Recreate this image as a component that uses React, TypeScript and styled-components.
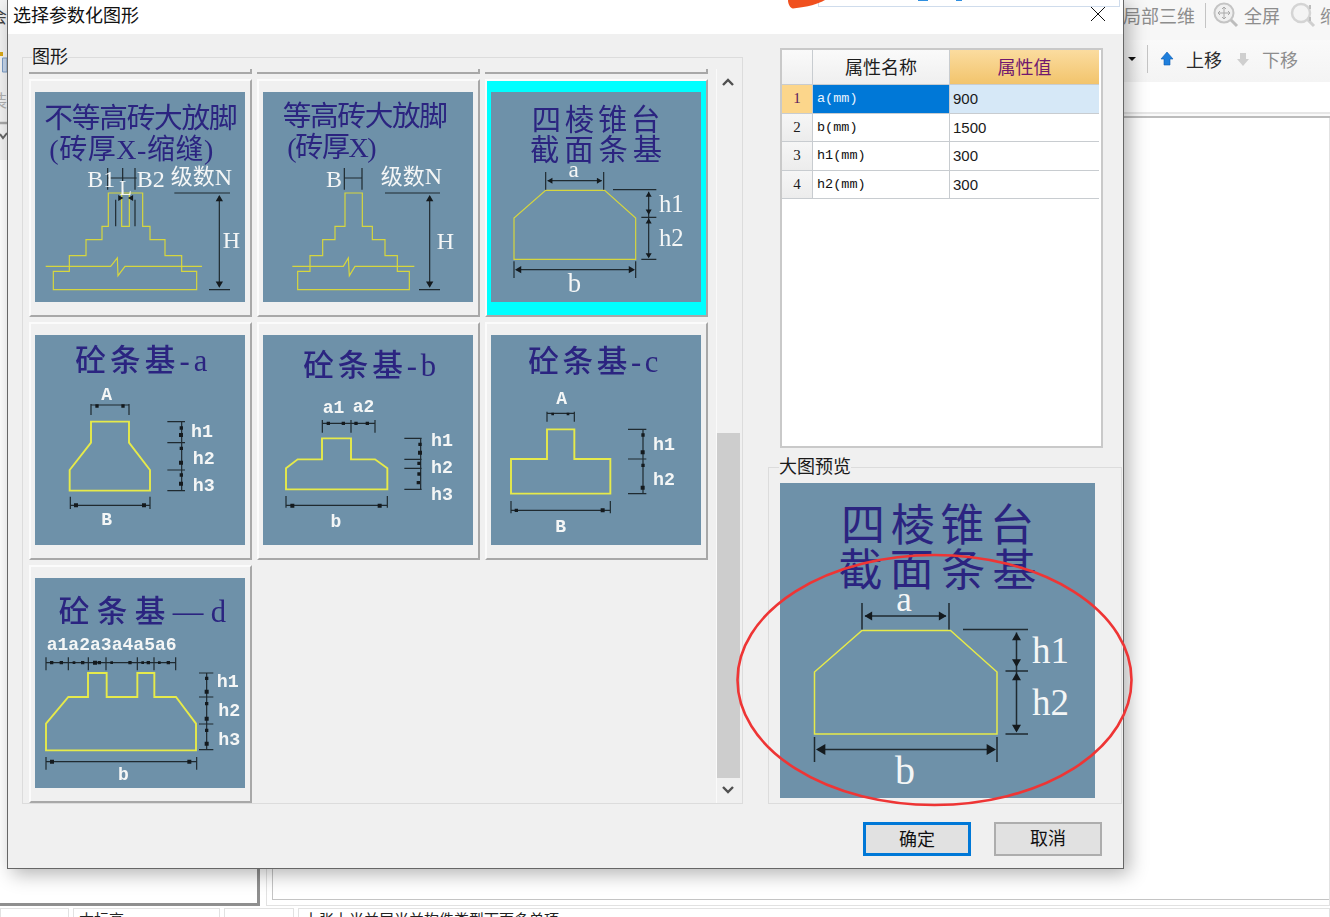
import React from "react";
import styled, { createGlobalStyle } from "styled-components";

const CJK = `"Noto Sans CJK SC", "Liberation Sans", sans-serif`;
const SERIF = `"Liberation Serif", "Noto Sans CJK SC", serif`;
const MONO = `"Liberation Mono", "Noto Sans CJK SC", monospace`;

const Global = createGlobalStyle`
  html, body { margin: 0; padding: 0; background: #fff; overflow: hidden; }
  body { font-family: ${CJK}; }
`;

const up = (x: number, y: number, s = 11) => `M${x} ${y}l${-s} ${s * 1.7}h${2 * s}z`;
const down = (x: number, y: number, s = 11) => `M${x} ${y}l${-s} ${-s * 1.7}h${2 * s}z`;
const left = (x: number, y: number, s = 11) => `M${x} ${y}l${s * 1.7} ${-s}v${2 * s}z`;
const right = (x: number, y: number, s = 11) => `M${x} ${y}l${-s * 1.7} ${-s}v${2 * s}z`;
const dot = (x: number, y: number, s = 4) => `M${x - s} ${y - s}h${2 * s}v${2 * s}h${-2 * s}z`;

type Txt = { x: number; y: number; s: number; t: string; w?: number; mid?: boolean };
type Spec = {
  box: string;
  titles: Txt[];
  labels: Txt[];
  bold?: boolean;
  outline: string;
  dims: string;
  heads: string;
};

const frustum: Spec = {
  box: "34 277 630 630",
  titles: [
    { x: 156, y: 392, s: 88, t: "四棱锥台", w: 386 },
    { x: 151, y: 482, s: 88, t: "截面条基", w: 396 },
  ],
  labels: [
    { x: 282, y: 533, s: 70, t: "a", mid: true },
    { x: 538, y: 637, s: 74, t: "h1" },
    { x: 538, y: 740, s: 74, t: "h2" },
    { x: 284, y: 878, s: 80, t: "b", mid: true },
  ],
  outline: "M198 572H375L468 655V779H103V655Z",
  dims: "M198 517V570M372 517V570M204 543H366M400 570H530M485 653H530M485 779H530M507 576V772M103 785V835M468 785V835M110 810H462",
  heads:
    left(203, 543, 9) + right(367, 543, 9) + up(507, 576, 9) + down(507, 645, 9) + up(507, 656, 9) + down(507, 776, 9) + left(106, 810) + right(466, 810),
};

const spec: Spec[] = [
  {
    box: "105 277 630 630",
    titles: [
      { x: 133, y: 385, s: 86, t: "不等高砖大放脚", w: 580 },
      { x: 148, y: 478, s: 84, t: "(砖厚X-缩缝)", w: 492 },
    ],
    labels: [
      { x: 262, y: 562, s: 72, t: "B1" },
      { x: 410, y: 562, s: 72, t: "B2" },
      { x: 358, y: 585, s: 62, t: "L" },
      { x: 512, y: 554, s: 66, t: "级数" },
      { x: 644, y: 556, s: 72, t: "N" },
      { x: 668, y: 745, s: 72, t: "H" },
    ],
    outline:
      "M160 815H208V768H258V720H306V680H325V580H428V680H450V720H495V768H545V815H590V870H160ZM365 580V680H388V580M137 800H332L352 775 354 828 375 800H606",
    dims: "M523 580H690M658 590V860M627 870H690M323 505V570M368 505V570M405 505V570M323 535H410M347 600V680M405 600V680",
    heads: up(658, 586) + down(658, 864) + right(370, 595, 9) + left(384, 595, 9),
  },
  {
    box: "789 277 630 630",
    titles: [
      { x: 848, y: 378, s: 86, t: "等高砖大放脚", w: 496 },
      { x: 862, y: 471, s: 84, t: "(砖厚X)", w: 268 },
    ],
    labels: [
      { x: 978, y: 562, s: 72, t: "B" },
      { x: 1142, y: 552, s: 66, t: "级数" },
      { x: 1274, y: 554, s: 72, t: "N" },
      { x: 1310, y: 748, s: 72, t: "H" },
    ],
    outline:
      "M893 815H930V768H968V720H1005V680H1035V580H1087V680H1117V720H1155V768H1192V815H1228V870H893ZM877 800H1030L1045 775 1048 828 1065 800H1243",
    dims: "M1033 505V570M1086 505V570M1033 535H1086M1155 580H1320M1289 590V860M1257 870H1320",
    heads: up(1289, 586) + down(1289, 864),
  },
  frustum,
  {
    box: "105 45 630 630",
    bold: true,
    titles: [{ x: 226, y: 152, s: 92, t: "砼条基-a", w: 396 }],
    labels: [
      { x: 320, y: 240, s: 54, t: "A", mid: true },
      { x: 573, y: 352, s: 55, t: "h1" },
      { x: 578, y: 432, s: 55, t: "h2" },
      { x: 578, y: 512, s: 55, t: "h3" },
      { x: 320, y: 615, s: 54, t: "B", mid: true },
    ],
    outline: "M273 305H387V368L450 450V512H209V450L273 368Z",
    dims: "M273 252V285M387 252V285M273 255H387M545 305V512M502 305H555M502 368H555M502 450H555M502 512H555M211 530V567M450 530V567M211 556H450",
    heads:
      dot(291, 258, 5) + dot(369, 258, 5) + dot(544, 324, 5) + dot(543, 345, 6) + dot(544, 385, 5) + dot(543, 428, 6) + dot(544, 465, 5) + dot(543, 491, 6) + dot(228, 556, 6) + dot(432, 556, 6),
  },
  {
    box: "789 45 630 630",
    bold: true,
    titles: [{ x: 910, y: 167, s: 92, t: "砼条基-b", w: 398 }],
    labels: [
      { x: 968, y: 280, s: 54, t: "a1" },
      { x: 1058, y: 275, s: 54, t: "a2" },
      { x: 1293, y: 378, s: 55, t: "h1" },
      { x: 1293, y: 458, s: 55, t: "h2" },
      { x: 1293, y: 540, s: 55, t: "h3" },
      { x: 1008, y: 620, s: 54, t: "b", mid: true },
    ],
    outline: "M966 355H1053V418H1125L1162 445V508H858V445L893 418H966Z",
    dims: "M967 300V338M1053 300V338M1125 300V338M967 310H1125M1262 355V508M1213 355H1265M1213 418H1265M1213 445H1265M1213 508H1265M858 528V563M1162 528V563M858 556H1162",
    heads:
      dot(985, 310, 5) + dot(1030, 310, 5) + dot(1068, 310, 5) + dot(1102, 310, 5) + dot(1260, 373, 5) + dot(1260, 398, 6) + dot(1257, 430, 5) + dot(1257, 462, 5) + dot(1255, 488, 5) + dot(877, 557, 6) + dot(1139, 557, 6),
  },
  {
    box: "34 45 630 630",
    bold: true,
    titles: [{ x: 146, y: 155, s: 92, t: "砼条基-c", w: 390 }],
    labels: [
      { x: 246, y: 252, s: 54, t: "A", mid: true },
      { x: 520, y: 390, s: 55, t: "h1" },
      { x: 520, y: 495, s: 55, t: "h2" },
      { x: 243, y: 635, s: 54, t: "B", mid: true },
    ],
    outline: "M202 328H284V417H392V521H94V417H202Z",
    dims: "M202 275V305M284 275V305M202 280H284M490 328V521M445 328H500M445 417H500M445 521H500M94 543V580M392 543V580M94 571H392",
    heads:
      dot(219, 282, 4) + dot(265, 282, 4) + dot(490, 345, 5) + dot(489, 397, 6) + dot(490, 436, 5) + dot(489, 503, 6) + dot(110, 571, 5) + dot(369, 571, 6),
  },
  {
    box: "105 55 630 630",
    bold: true,
    titles: [{ x: 176, y: 187, s: 92, t: "砼条基—d", w: 502 }],
    labels: [
      { x: 140, y: 270, s: 54, t: "a1a2a3a4a5a6", w: 390 },
      { x: 650, y: 383, s: 55, t: "h1" },
      { x: 655, y: 468, s: 55, t: "h2" },
      { x: 655, y: 556, s: 55, t: "h3" },
      { x: 370, y: 660, s: 54, t: "b", mid: true },
    ],
    outline: "M264 340H320V412H412V340H463V412H528L588 492V572H138V492L205 412H264Z",
    dims: "M138 293V332M205 293V332M265 293V332M318 293V332M412 293V332M462 293V332M527 293V332M138 309H527M620 340V570M597 340H640M597 412H640M597 493H640M597 570H640M138 592V630M590 592V630M138 606H590",
    heads:
      dot(155, 309, 5) + dot(184, 309, 5) + dot(222, 309, 4) + dot(248, 309, 5) + dot(285, 309, 6) + dot(298, 309, 5) + dot(335, 309, 4) + dot(390, 309, 5) + dot(428, 309, 4) + dot(445, 309, 5) + dot(478, 309, 4) + dot(505, 309, 5) + dot(620, 356, 5) + dot(620, 396, 6) + dot(620, 432, 5) + dot(620, 477, 6) + dot(620, 512, 5) + dot(620, 552, 6) + dot(156, 606, 6) + dot(568, 606, 6),
  },
];

const Desktop = styled.div`
  position: relative;
  width: 1330px;
  height: 917px;
  overflow: hidden;
  display: flex;
  flex-direction: column;
  background: #fff;
`;

const TopBar = styled.div`
  height: 40px;
  display: flex;
  align-items: center;
  padding-left: 1123px;
  background: #f7f7f7;
  box-sizing: border-box;
  padding-bottom: 10px;
`;
const ToolSep = styled.i<{ $h?: number; $gap?: number }>`
  display: block;
  width: 1px;
  height: ${(p) => p.$h ?? 25}px;
  margin-left: ${(p) => p.$gap ?? 0}px;
  background: #c4c4c4;
  flex: none;
`;
const ToolText = styled.span<{ $on?: boolean; $gap?: number }>`
  margin-left: ${(p) => p.$gap ?? 0}px;
  font-size: 18px;
  line-height: 24px;
  color: ${(p) => (p.$on ? "#2a2a2a" : "#8d8d8d")};
  white-space: nowrap;
  flex: none;
`;
const ToolIcon = styled.svg<{ $gap?: number }>`
  display: block;
  flex: none;
  margin-left: ${(p) => p.$gap ?? 0}px;
`;
const SubBar = styled.div`
  height: 42px;
  display: flex;
  align-items: center;
  padding-left: 1128px;
  background: linear-gradient(#fafafa, #f4f4f4);
  box-sizing: border-box;
  padding-bottom: 4px;
`;
const Caret = styled.i`
  width: 0;
  height: 0;
  border-left: 4px solid transparent;
  border-right: 4px solid transparent;
  border-top: 4px solid #111;
  flex: none;
  margin-right: 11px;
`;
const Blank = styled.div`
  height: 30px;
  background: #fff;
`;
const Rule = styled.div`
  height: 6px;
  box-sizing: border-box;
  border-top: 2px solid #e6e6e6;
  border-bottom: 2px solid #bcbcbc;
  background: #fafafa;
`;
const Workspace = styled.div`
  height: 788px;
  display: flex;
  gap: 6px;
`;
const LeftPanel = styled.div`
  width: 260px;
  box-sizing: border-box;
  border-right: 3px solid #8f8f8f;
  border-bottom: 3px solid #8f8f8f;
  background: #fff;
`;
const RightPanel = styled.div`
  flex: 1;
  box-sizing: border-box;
  border: 1px solid #e2e2e2;
  border-top: none;
  padding: 0 0 5px 5px;
`;
const RightInner = styled.div`
  height: 100%;
  box-sizing: border-box;
  border-left: 1px solid #c4c4c4;
  border-bottom: 1px solid #c4c4c4;
`;
const Status = styled.div`
  flex: 1;
  display: flex;
  gap: 4px;
  padding-top: 2px;
  overflow: hidden;
`;
const StatusCell = styled.div<{ $w?: number }>`
  width: ${(p) => (p.$w ? `${p.$w}px` : "auto")};
  flex: ${(p) => (p.$w ? "none" : "1")};
  box-sizing: border-box;
  border: 1px solid #e2e2e2;
  border-bottom: none;
  height: 30px;
  padding: 2px 0 0 5px;
  font-size: 15px;
  line-height: 16px;
  color: #222;
  white-space: nowrap;
`;

/* The slice of the window behind the dialog that stays visible along its left edge. */
const Rail = styled.div`
  position: absolute;
  left: 0;
  top: 0;
  width: 7px;
  height: 160px;
  overflow: hidden;
  background: #f3f3f3;
  display: flex;
  flex-direction: column;
`;
const RailGlyph = styled.span<{ $top: number; $dim?: boolean }>`
  display: block;
  flex: none;
  margin: ${(p) => p.$top}px 0 0 -10px;
  font-size: 17px;
  line-height: 20px;
  color: ${(p) => (p.$dim ? "#b0b0b0" : "#444")};
`;
const RailIcon = styled.svg<{ $top: number }>`
  display: block;
  flex: none;
  margin-top: ${(p) => p.$top}px;
`;

const Dialog = styled.div`
  position: absolute;
  left: 7px;
  top: 0;
  width: 1117px;
  height: 869px;
  box-sizing: border-box;
  border: 1px solid #666;
  border-top: none;
  background: #f0f0f0;
  box-shadow: 5px 5px 18px rgba(0, 0, 0, 0.3);
  display: flex;
  flex-direction: column;
`;
const TitleBar = styled.div`
  height: 34px;
  flex: none;
  background: #fff;
  display: flex;
  align-items: center;
  justify-content: space-between;
  padding: 0 17px 7px 5px;
  box-sizing: border-box;
  font-size: 18px;
  color: #111;
`;
const Main = styled.div`
  display: flex;
  padding: 14px 0 0 14px;
  flex: none;
`;
const Group = styled.div`
  position: relative;
  flex: none;
  width: 721px;
  height: 747px;
  margin-top: 9px;
  box-sizing: border-box;
  border: 1px solid #dcdcdc;
  display: flex;
  padding: 11px 0 0 6px;
`;
const Legend = styled.span<{ $left: number; $top: number }>`
  position: absolute;
  left: ${(p) => p.$left}px;
  top: ${(p) => p.$top}px;
  font-size: 18px;
  line-height: 20px;
  color: #1a1a1a;
  background: #f0f0f0;
  white-space: nowrap;
`;
const Cards = styled.div`
  display: grid;
  grid-template-columns: repeat(3, 223px);
  grid-template-rows: 5px;
  grid-auto-rows: 238px;
  row-gap: 5px;
  column-gap: 5px;
  width: 679px;
  height: 734px;
  overflow: hidden;
  flex: none;
`;
const Stub = styled.div`
  border-right: 2px solid #a8a8a8;
  border-bottom: 2px solid #a8a8a8;
  box-sizing: border-box;
  height: 5px;
`;
const Card = styled.div<{ $active?: boolean }>`
  box-sizing: border-box;
  background: ${(p) => (p.$active ? "#00ffff" : "#f0f0f0")};
  border-top: 2px solid #fbfbfb;
  border-left: 2px solid #fbfbfb;
  border-right: 2px solid #a8a8a8;
  border-bottom: 2px solid #a8a8a8;
  padding: 11px 0 0 4px;
`;
const Picture = styled.svg<{ $soft?: boolean; $px: number }>`
  display: block;
  width: ${(p) => p.$px}px;
  height: ${(p) => p.$px}px;
  background: #6e91a9;
  filter: ${(p) => (p.$soft ? "blur(0.35px)" : "none")};
`;
const Title = styled.text<{ $bold?: boolean }>`
  font-family: ${SERIF};
  fill: #2b2480;
  font-weight: ${(p) => (p.$bold ? 500 : 400)};
`;
const Label = styled.text<{ $bold?: boolean }>`
  font-family: ${(p) => (p.$bold ? MONO : SERIF)};
  fill: #f4f6f6;
  font-weight: ${(p) => (p.$bold ? 700 : 400)};
`;
const Outline = styled.path<{ $w: number; $bright?: boolean }>`
  fill: none;
  stroke: ${(p) => (p.$bright ? "#e6ea4a" : "#d6d63e")};
  stroke-width: ${(p) => p.$w}px;
  vector-effect: non-scaling-stroke;
`;
const Dims = styled.path<{ $w: number }>`
  fill: none;
  stroke: #1f2a30;
  stroke-width: ${(p) => p.$w}px;
  vector-effect: non-scaling-stroke;
`;
const Heads = styled.path`
  fill: #141a1e;
`;
const Scrollbar = styled.div`
  width: 23px;
  margin-left: 8px;
  height: 734px;
  flex: none;
  display: flex;
  flex-direction: column;
  align-items: center;
  border-left: 1px solid #fafafa;
  box-sizing: content-box;
`;
const ScrollBtn = styled.svg`
  display: block;
  flex: none;
`;
const Track = styled.div`
  flex: 1;
  width: 100%;
  display: flex;
  flex-direction: column;
  justify-content: flex-end;
`;
const Thumb = styled.div`
  height: 345px;
  background: #cdcdcd;
`;
const Side = styled.div`
  margin-left: 25px;
  width: 354px;
  flex: none;
  display: flex;
  flex-direction: column;
`;
const TablePanel = styled.div`
  margin-left: 12px;
  width: 323px;
  height: 400px;
  box-sizing: border-box;
  background: #fff;
  border: 2px solid #c9c9c9;
`;
const TableGrid = styled.div`
  display: grid;
  grid-template-columns: 30px 136px 149px;
  grid-template-rows: 34px repeat(4, 27.5px);
  gap: 1px;
  background: #c8ccd0;
  width: 317px;
  padding-bottom: 1px;
`;
const Head = styled.div<{ $on?: boolean }>`
  display: flex;
  align-items: center;
  justify-content: center;
  font-size: 18px;
  padding-bottom: 2px;
  box-sizing: border-box;
  color: ${(p) => (p.$on ? "#70186e" : "#1c1c1c")};
  background: ${(p) => (p.$on ? "linear-gradient(#fbdc9f, #f2c46c)" : "linear-gradient(#fafafa, #efefef)")};
`;
const RowNo = styled.div<{ $on?: boolean }>`
  display: flex;
  align-items: center;
  justify-content: center;
  font-family: ${SERIF};
  font-size: 15px;
  color: ${(p) => (p.$on ? "#5a1a5e" : "#1c1c1c")};
  background: ${(p) => (p.$on ? "#fcd68b" : "linear-gradient(#f6f6f6, #ececec)")};
`;
const NameCell = styled.div<{ $on?: boolean }>`
  display: flex;
  align-items: center;
  padding-left: 4px;
  font-family: "Liberation Mono", monospace;
  font-size: 13.5px;
  color: ${(p) => (p.$on ? "#e8f4ff" : "#111")};
  background: ${(p) => (p.$on ? "#0078d7" : "#fff")};
`;
const ValueCell = styled.div<{ $on?: boolean }>`
  display: flex;
  align-items: center;
  padding-left: 3px;
  font-family: "Liberation Sans", sans-serif;
  font-size: 15px;
  color: #1a1a1a;
  background: ${(p) => (p.$on ? "#d6e8f7" : "#fff")};
`;
const PreviewGroup = styled.div`
  position: relative;
  margin-top: 19px;
  height: 337px;
  box-sizing: border-box;
  border: 1px solid #dcdcdc;
  padding: 15px 0 0 11px;
`;
const Footer = styled.div`
  display: flex;
  justify-content: flex-end;
  gap: 23px;
  padding: 18px 21px 0 0;
`;
const Button = styled.button<{ $primary?: boolean }>`
  width: 108px;
  height: 34px;
  box-sizing: border-box;
  background: #e1e1e1;
  border: ${(p) => (p.$primary ? "3px solid #0078d7" : "2px solid #adadad")};
  padding: 0 0 4px;
  font-family: ${CJK};
  font-size: 18px;
  color: #111;
`;
const Ring = styled.svg`
  position: absolute;
  left: 735px;
  top: 553px;
  display: block;
`;
const Banner = styled.div`
  position: absolute;
  left: 818px;
  top: 0;
  width: 302px;
  height: 7px;
  box-sizing: border-box;
  background: #fff;
  border: 1px solid #cfdcec;
  border-top: none;
  display: flex;
  gap: 28px;
  padding-left: 99px;
`;
const BannerTick = styled.i<{ $w: number }>`
  display: block;
  width: ${(p) => p.$w}px;
  height: 1px;
  background: #2f8fe0;
`;
const Swoosh = styled.svg`
  position: absolute;
  left: 788px;
  top: 0;
  display: block;
`;

const Drawing = ({ d, px, soft }: { d: Spec; px: number; soft?: boolean }) => {
  const w = px > 300 ? 1.5 : 1.2;
  return (
    <Picture viewBox={d.box} $px={px} $soft={soft}>
      <Outline d={d.outline} $w={d.bold ? w + 0.7 : w} $bright={d.bold || px > 300} />
      <Dims d={d.dims} $w={w} />
      <Heads d={d.heads} />
      {d.titles.map((t) => (
        <Title key={t.t} x={t.x} y={t.y} fontSize={t.s} textLength={t.w} lengthAdjust="spacing" $bold={d.bold}>
          {t.t}
        </Title>
      ))}
      {d.labels.map((t) => (
        <Label
          key={t.t + t.x}
          x={t.x}
          y={t.y}
          fontSize={t.s}
          textLength={t.w}
          textAnchor={t.mid ? "middle" : "start"}
          $bold={d.bold}
        >
          {t.t}
        </Label>
      ))}
    </Picture>
  );
};

const rows = [
  ["1", "a(mm)", "900"],
  ["2", "b(mm)", "1500"],
  ["3", "h1(mm)", "300"],
  ["4", "h2(mm)", "300"],
];

export default function App() {
  return (
    <Desktop>
      <Global />
      <TopBar>
        <ToolText>局部三维</ToolText>
        <ToolSep $gap={10} />
        <ToolIcon $gap={7} width="26" height="26" viewBox="0 0 26 26">
          <circle cx="11" cy="11" r="9.5" fill="#efefef" stroke="#c4c4c4" strokeWidth="2" />
          <path d="M11 5v12M5 11h12M9 7l2-2 2 2M9 15l2 2 2-2M7 9l-2 2 2 2M15 9l2 2-2 2" fill="none" stroke="#a8a8a8" />
          <path d="M18 18l6 6" stroke="#bdbdbd" strokeWidth="3" />
        </ToolIcon>
        <ToolText $gap={5}>全屏</ToolText>
        <ToolIcon $gap={10} width="26" height="26" viewBox="0 0 26 26">
          <circle cx="11" cy="11" r="9" fill="#f4f4f4" stroke="#d4d4d4" strokeWidth="2.5" />
          <path d="M18 18l6 6" stroke="#cfcfcf" strokeWidth="3" />
          <path d="M20 3v4M20 15v4" stroke="#bdbdbd" strokeWidth="2" />
        </ToolIcon>
        <ToolText $gap={4}>缩</ToolText>
      </TopBar>
      <SubBar>
        <Caret />
        <ToolSep $h={28} />
        <ToolIcon $gap={12} width="14" height="16" viewBox="0 0 14 16">
          <path d="M7 1L13 8H10V14H4V8H1Z" fill="#1f7fdc" stroke="#0c5cb4" strokeWidth="0.6" />
        </ToolIcon>
        <ToolText $on $gap={12}>上移</ToolText>
        <ToolIcon $gap={14} width="14" height="16" viewBox="0 0 14 16">
          <path d="M7 15L13 8H10V2H4V8H1Z" fill="#cfcfcf" />
        </ToolIcon>
        <ToolText $gap={12}>下移</ToolText>
      </SubBar>
      <Blank />
      <Rule />
      <Workspace>
        <LeftPanel />
        <RightPanel>
          <RightInner />
        </RightPanel>
      </Workspace>
      <Status>
        <StatusCell $w={69} />
        <StatusCell $w={147}>本标高</StatusCell>
        <StatusCell $w={70} />
        <StatusCell>上张上当并层当并构件类型下面多单项</StatusCell>
      </Status>

      <Rail>
        <RailGlyph $top={6}>会</RailGlyph>
        <RailIcon $top={24} width="7" height="24" viewBox="0 0 7 24">
          <path d="M0 2h3v4H0z" fill="#d8a818" />
          <path d="M2.5 8H7v14H2.5z" fill="#c6d6ea" stroke="#7a9cc6" />
        </RailIcon>
        <RailGlyph $top={16} $dim>装</RailGlyph>
        <RailIcon $top={10} width="7" height="26" viewBox="0 0 7 26">
          <path d="M0 3h7" stroke="#a8a8a8" strokeWidth="2.5" />
          <path d="M0 14l3 4 4-5" fill="none" stroke="#666" strokeWidth="2" />
        </RailIcon>
      </Rail>

      <Dialog>
        <TitleBar>
          选择参数化图形
          <svg width="16" height="16" viewBox="0 0 16 16">
            <path d="M1 1L15 15M15 1L1 15" stroke="#111" strokeWidth="1" fill="none" />
          </svg>
        </TitleBar>
        <Main>
          <Group>
            <Legend $left={9} $top={-13}>图形</Legend>
            <Cards>
              <Stub />
              <Stub />
              <Stub />
              {spec.map((d, i) => (
                <Card key={d.box + i} $active={i === 2}>
                  <Drawing d={d} px={210} soft />
                </Card>
              ))}
            </Cards>
            <Scrollbar>
              <ScrollBtn width="23" height="26" viewBox="0 0 23 26">
                <path d="M6 16l5-5 5 5" fill="none" stroke="#505050" strokeWidth="2.4" />
              </ScrollBtn>
              <Track>
                <Thumb />
              </Track>
              <ScrollBtn width="23" height="25" viewBox="0 0 23 25">
                <path d="M6 9l5 5 5-5" fill="none" stroke="#505050" strokeWidth="2.4" />
              </ScrollBtn>
            </Scrollbar>
          </Group>
          <Side>
            <TablePanel>
              <TableGrid>
                <Head />
                <Head>属性名称</Head>
                <Head $on>属性值</Head>
                {rows.map((r, i) => (
                  <React.Fragment key={r[0]}>
                    <RowNo $on={i === 0}>{r[0]}</RowNo>
                    <NameCell $on={i === 0}>{r[1]}</NameCell>
                    <ValueCell $on={i === 0}>{r[2]}</ValueCell>
                  </React.Fragment>
                ))}
              </TableGrid>
            </TablePanel>
            <PreviewGroup>
              <Legend $left={10} $top={-13}>大图预览</Legend>
              <Drawing d={frustum} px={315} />
            </PreviewGroup>
          </Side>
        </Main>
        <Footer>
          <Button $primary>确定</Button>
          <Button>取消</Button>
        </Footer>
      </Dialog>

      <Banner>
        <BannerTick $w={10} />
        <BannerTick $w={6} />
      </Banner>
      <Swoosh width="38" height="9" viewBox="0 0 38 9">
        <path d="M0 0H37C30 4 20 7 5 8.5 2 8 0 4 0 0Z" fill="#f0501e" />
      </Swoosh>
      <Ring width="400" height="256" viewBox="0 0 400 256">
        <ellipse cx="199.5" cy="127" rx="197" ry="125" fill="none" stroke="#ee3535" strokeWidth="2.6" />
      </Ring>
    </Desktop>
  );
}
